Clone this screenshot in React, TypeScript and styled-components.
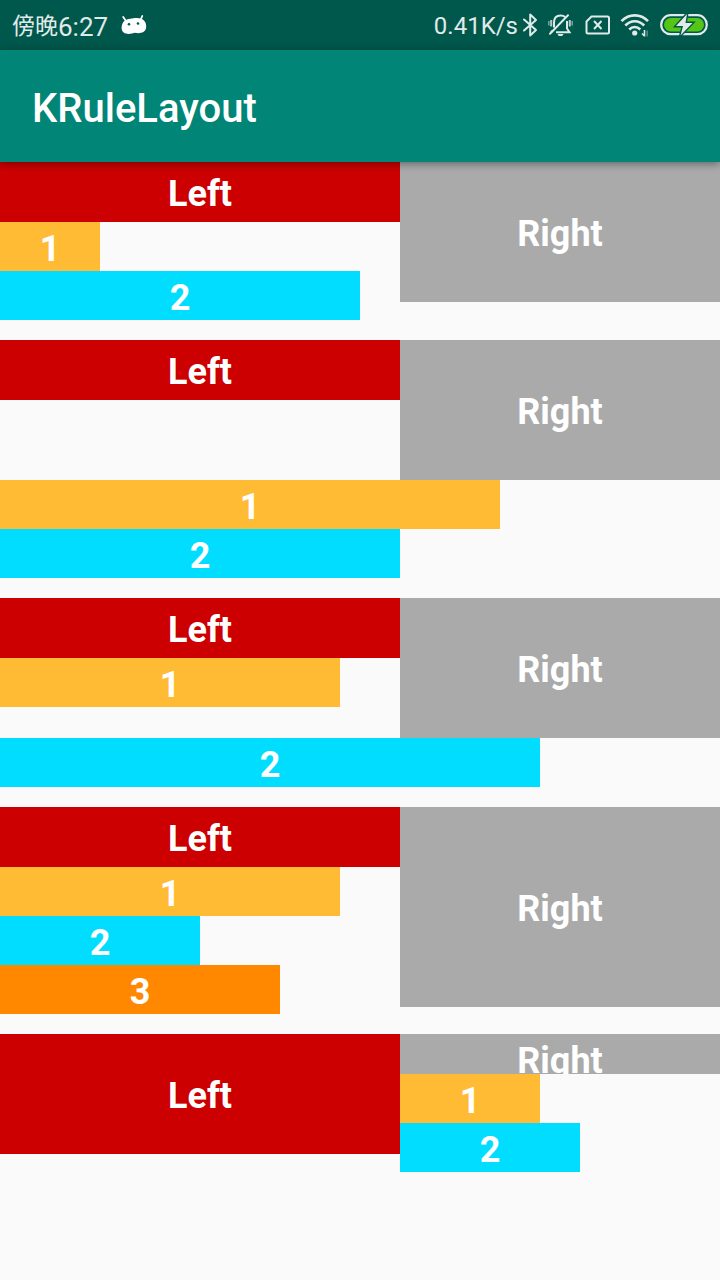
import React from "react";
import styled, { createGlobalStyle } from "styled-components";

const GlobalStyle = createGlobalStyle`
  *, *::before, *::after { box-sizing: border-box; }
  body {
    margin: 0;
    background: #fafafa;
    font-family: Roboto, "Noto Sans CJK SC", sans-serif;
  }
`;

const colors = {
  red: "#cc0000",
  gray: "#aaaaaa",
  amber: "#ffbb33",
  cyan: "#00ddff",
  orange: "#ff8800",
};

const StatusBar = styled.div`
  display: flex;
  align-items: center;
  justify-content: space-between;
  height: 50px;
  padding: 0 12px;
  background: #00574b;
  color: #e0ebe9;
  font-size: 24px;
  line-height: 32px;
  white-space: nowrap;
`;

const StatusGroup = styled.div<{ $gap: number }>`
  display: flex;
  align-items: center;
  gap: ${({ $gap }) => $gap}px;
`;

const Clock = styled.time`
  display: flex;
  padding-top: 4px;
  font-size: 26px;
`;

const DayPart = styled.span`
  font-size: 23px;
`;

const Speed = styled.span`
  padding-top: 2px;
`;

const Icon = styled.svg`
  display: block;
  flex: none;
  overflow: visible;
`;

const AppBar = styled.header`
  position: relative;
  z-index: 1;
  display: flex;
  align-items: center;
  height: 112px;
  padding: 6px 32px 0;
  background: #008577;
  box-shadow: 0 2px 8px rgba(0, 0, 0, 0.4);
`;

const Title = styled.h1`
  margin: 0;
  color: #fff;
  font-size: 40px;
  font-weight: 500;
  line-height: 48px;
`;

const Samples = styled.main`
  display: flex;
  flex-direction: column;
  gap: 20px;
`;

const RuleLayout = styled.section`
  display: flex;
  flex-direction: column;
`;

const Columns = styled.div`
  display: grid;
  grid-template-columns: 5fr 4fr;
  align-items: start;
`;

const Stack = styled.div`
  display: flex;
  flex-direction: column;
  align-items: flex-start;
`;

const Block = styled.div<{ $color: string; $height?: number; $width?: number }>`
  display: flex;
  align-items: safe center;
  justify-content: center;
  width: ${({ $width }) => ($width ? `${$width}px` : "100%")};
  height: ${({ $height }) => $height ?? 49}px;
  overflow: hidden;
  background: ${({ $color }) => $color};
`;

const Label = styled.span`
  flex: none;
  padding: 5px 0 2px;
  color: #fff;
  font-size: 36px;
  font-weight: 700;
  line-height: 44px;
`;

type Item = { text: string; color: string; width: number };
type Sample = {
  left: number;
  right: number;
  underLeft?: Item[];
  underRight?: Item[];
  below?: Item[];
};

const one = (width: number): Item => ({ text: "1", color: colors.amber, width });
const two = (width: number): Item => ({ text: "2", color: colors.cyan, width });
const three = (width: number): Item => ({ text: "3", color: colors.orange, width });

const samples: Sample[] = [
  { left: 60, right: 140, underLeft: [one(100), two(360)] },
  { left: 60, right: 140, below: [one(500), two(400)] },
  { left: 60, right: 140, underLeft: [one(340)], below: [two(540)] },
  { left: 60, right: 200, underLeft: [one(340), two(200), three(280)] },
  { left: 120, right: 40, underRight: [one(140), two(180)] },
];

const Items = ({ items = [] }: { items?: Item[] }) => (
  <>
    {items.map((item) => (
      <Block key={item.text} $color={item.color} $width={item.width}>
        <Label>{item.text}</Label>
      </Block>
    ))}
  </>
);

const AndroidIcon = () => (
  <Icon width="26" height="20" viewBox="0 0 26 20" fill="#fff" aria-label="Android">
    <path d="M2.2 2 5 6M21.300 1 19.500 5" stroke="#fff" strokeWidth="1.800" strokeLinecap="round" />
    <path d="M1.500 8.500C3 4.500 8 3.600 12.500 3.200c5-.4 10.200.2 12 4.600 1.400 3.700.7 7.700-2.200 9.300-2.600 1.500-6 1.200-8.800.7-3 1.300-8 1.900-10.800-.2C.2 15.500.2 11.800 1.500 8.500Z" />
    <circle cx="8" cy="9.200" r="1.300" fill="#00574b" />
    <circle cx="17" cy="8.500" r="1.300" fill="#00574b" />
  </Icon>
);

const BluetoothIcon = () => (
  <Icon width="16" height="24" viewBox="0 0 16 24" fill="none" stroke="#e0ebe9" strokeWidth="2" aria-label="Bluetooth">
    <path d="M2 6.500 14 17 8.200 22.500V1.500L14 7 2 17.500" strokeLinejoin="round" strokeLinecap="round" />
  </Icon>
);

const MutedBellIcon = () => (
  <Icon width="26" height="24" viewBox="0 0 26 24" fill="none" stroke="#e0ebe9" strokeWidth="2" aria-label="Silent">
    <path d="M6 14.500V9.500C6 5 8.500 2.500 12.500 2.500c1.900 0 3.500.5 4.700 1.600M19 8v7.500l2.500 3.700H8M3 19.200l1.500-1.500" />
    <path d="M2 20.700 20 2.300" strokeLinecap="round" />
    <path d="M9.500 21h6l-1.300 2h-3.400z" fill="#e0ebe9" stroke="none" />
    <path d="M3.200 7v6.500M21.800 7v6.500" opacity=".8" />
    <path d="M.8 8v4.500M24.200 8v4.500" opacity=".5" strokeWidth="1.600" />
  </Icon>
);

const NoSimIcon = () => (
  <Icon width="26" height="20" viewBox="0 0 26 20" fill="none" stroke="#e0ebe9" strokeWidth="2" aria-label="No SIM">
    <path d="M7.500 1.500H23.500q1.500 0 1.500 1.500v14q0 1.500-1.500 1.500H4q-1.500 0-1.500-1.500V6.500z" strokeLinejoin="round" />
    <path d="m10 6 7.500 8m0-8-7.500 8" />
  </Icon>
);

const WifiIcon = () => (
  <Icon width="30" height="22" viewBox="0 0 30 22" fill="none" stroke="#e0ebe9" strokeWidth="2.600" aria-label="Wi-Fi">
    <path d="M1.500 7.200C9-.6 20.500-.6 28 7.200M5.300 11.500c5.500-5.700 13.400-5.700 18.900 0M9.200 15.500c3.300-3.400 7.800-3.400 11.100 0" />
    <circle cx="14.700" cy="19" r="2.600" fill="#e0ebe9" stroke="none" />
    <path d="M24.500 16v6.500M22 19.500l2.500 2.500" strokeWidth="1.600" />
    <path d="M27.200 22.500v-6" strokeWidth="1.600" opacity=".35" />
  </Icon>
);

const BatteryIcon = () => (
  <Icon width="48" height="22" viewBox="0 0 48 22" aria-label="Charging">
    <rect x="1.200" y="1.200" width="45.600" height="19" rx="9.500" fill="none" stroke="#e0ebe9" strokeWidth="2.200" />
    <rect x="4" y="4" width="40" height="13.500" rx="6.750" fill="#55c516" />
    <path d="M27 0 16 12h7L20.500 21.500 32.500 9h-7z" fill="#e0ebe9" stroke="#00574b" strokeWidth="2.800" paintOrder="stroke" />
  </Icon>
);

export default function App() {
  return (
    <>
      <GlobalStyle />
      <StatusBar>
        <StatusGroup $gap={13}>
          <Clock>
            <DayPart>傍晚</DayPart>6:27
          </Clock>
          <AndroidIcon />
        </StatusGroup>
        <StatusGroup $gap={10}>
          <StatusGroup $gap={4}>
            <Speed>0.41K/s</Speed>
            <BluetoothIcon />
          </StatusGroup>
          <MutedBellIcon />
          <NoSimIcon />
          <WifiIcon />
          <BatteryIcon />
        </StatusGroup>
      </StatusBar>
      <AppBar>
        <Title>KRuleLayout</Title>
      </AppBar>
      <Samples>
        {samples.map((sample, index) => (
          <RuleLayout key={index}>
            <Columns>
              <Stack>
                <Block $color={colors.red} $height={sample.left}>
                  <Label>Left</Label>
                </Block>
                <Items items={sample.underLeft} />
              </Stack>
              <Stack>
                <Block $color={colors.gray} $height={sample.right}>
                  <Label>Right</Label>
                </Block>
                <Items items={sample.underRight} />
              </Stack>
            </Columns>
            <Items items={sample.below} />
          </RuleLayout>
        ))}
      </Samples>
    </>
  );
}
